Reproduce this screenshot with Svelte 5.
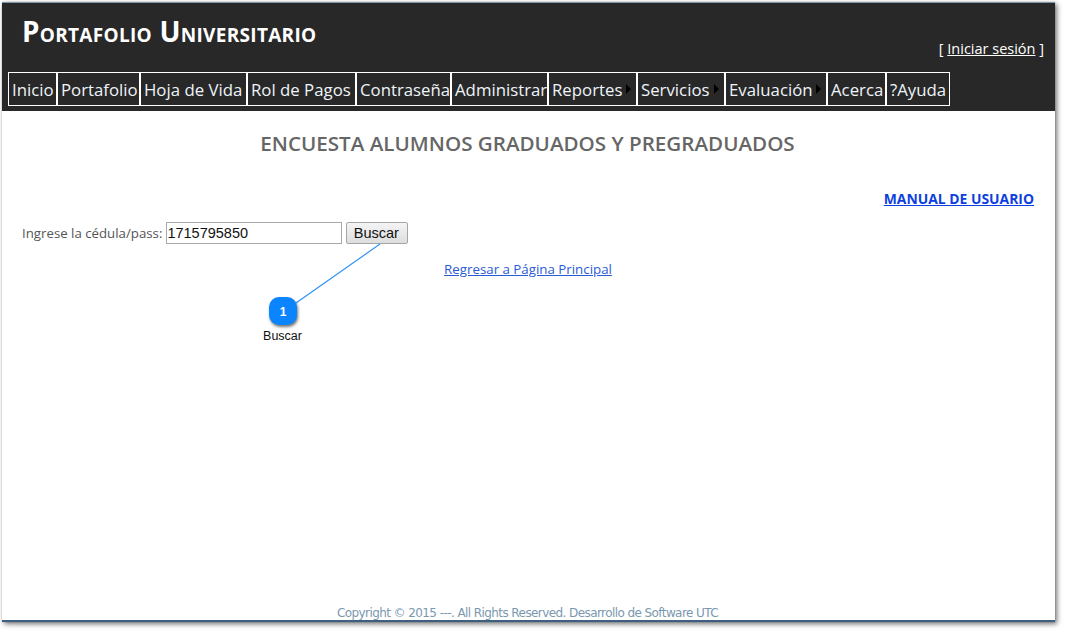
<script>
  const items = [
    { label: 'Inicio', w: 49 },
    { label: 'Portafolio', w: 83 },
    { label: 'Hoja de Vida', w: 107 },
    { label: 'Rol de Pagos', w: 109 },
    { label: 'Contraseña', w: 95 },
    { label: 'Administrar', w: 97 },
    { label: 'Reportes', w: 89, arrow: true },
    { label: 'Servicios', w: 88, arrow: true },
    { label: 'Evaluación', w: 102, arrow: true },
    { label: 'Acerca', w: 59 },
    { label: '?Ayuda', w: 64 }
  ];
</script>

<div class="stage">
  <div class="page">
    <header class="head">
      <div class="top">
        <h1 class="brand">Portafolio Universitario</h1>
        <div class="login">[ <a href="#a">Iniciar sesión</a> ]</div>
      </div>
      <nav class="menu">
        {#each items as it}
          <div class="item" style="width:{it.w}px">
            <span>{it.label}</span>
            {#if it.arrow}<i class="arrow"></i>{/if}
          </div>
        {/each}
      </nav>
    </header>

    <main class="body">
      <h2 class="title">ENCUESTA ALUMNOS GRADUADOS Y PREGRADUADOS</h2>
      <div class="manual"><a href="#m">MANUAL DE USUARIO</a></div>
      <div class="search">
        <label for="ced">Ingrese la cédula/pass:</label>
        <input id="ced" value="1715795850" />
        <button>Buscar</button>
      </div>
      <div class="back"><a href="#b">Regresar a Página Principal</a></div>
    </main>

    <footer class="foot">Copyright © 2015 ---. All Rights Reserved. Desarrollo de Software UTC</footer>
  </div>

  <svg class="line" width="1068" height="637" aria-hidden="true">
    <line x1="380" y1="244" x2="296" y2="303" stroke="#2f93f5" stroke-width="1.2" />
  </svg>
  <div class="pin">1</div>
  <div class="pin-label">Buscar</div>
</div>

<style>
  :global(body) { margin: 0; background: #fff; }
  .stage {
    position: relative;
    width: 1068px;
    height: 637px;
    padding: 2px 0 0 2px;
    box-sizing: border-box;
    overflow: hidden;
    font-family: "Open Sans", "Noto Sans", sans-serif;
  }
  .page {
    width: 1053px;
    height: 620px;
    background: #fff;
    border-bottom: 2px solid #3f5f80;
    box-sizing: border-box;
    box-shadow: 2px 2px 5px rgba(0, 0, 0, 0.55), 0 0 1px rgba(0, 0, 0, 0.3);
    display: flex;
    flex-direction: column;
  }
  .head {
    background: #282828;
    height: 109px;
    box-sizing: border-box;
    padding: 0 0 0 6px;
    border-top: 1px solid #7d97ad;
  }
  .top {
    height: 69px;
    display: flex;
    justify-content: space-between;
    box-sizing: border-box;
    padding: 0 11px 0 14px;
  }
  .brand {
    margin: 10px 0 0;
    font-size: 27.8px;
    line-height: 36px;
    font-weight: 700;
    font-variant: small-caps;
    color: #fff;
    letter-spacing: 0.3px;
    font-family: "Open Sans", sans-serif;
  }
  .login {
    margin-top: 36px;
    font-size: 14.5px;
    line-height: 20px;
    color: #fff;
  }
  .login a { color: #fff; }
  .menu { display: flex; }
  .item {
    height: 34px;
    box-sizing: border-box;
    border: 1px solid #fff;
    padding-left: 3px;
    display: flex;
    align-items: center;
    color: #eef4f9;
    font-size: 16.8px;
    white-space: nowrap;
    position: relative;
    background: #282828;
  }
  .arrow {
    position: absolute;
    right: 5px;
    top: 11px;
    width: 0;
    height: 0;
    border-left: 5px solid #000;
    border-top: 5px solid transparent;
    border-bottom: 5px solid transparent;
  }
  .body { flex: 1; padding: 0 0 0 20px; color: #444; }
  .title {
    margin: 18px 0 0;
    padding-right: 22px;
    text-align: center;
    font-size: 20.6px;
    line-height: 28px;
    font-weight: 600;
    color: #666;
  }
  .manual {
    margin-top: 32px;
    padding-right: 21px;
    text-align: right;
    font-size: 13.9px;
    line-height: 20px;
    font-weight: 700;
  }
  .manual a { color: #0d3fe0; }
  .search {
    display: flex;
    align-items: center;
    margin-top: 13px;
    height: 22px;
    font-size: 13.25px;
    color: #555;
  }
  .search label { margin-right: 4px; }
  .search input {
    width: 176px;
    height: 22px;
    box-sizing: border-box;
    border: 1px solid #a9a9a9;
    padding: 0;
    font: 14.5px "Liberation Sans", Arial, sans-serif;
    color: #111;
    outline: none;
  }
  .search button {
    margin-left: 4px;
    width: 62px;
    height: 22px;
    box-sizing: border-box;
    border: 1px solid #a6a6a6;
    border-radius: 2px;
    background: linear-gradient(#f4f4f4, #dedede);
    padding: 0 2px 0 0;
    font: 14.5px "Liberation Sans", Arial, sans-serif;
    color: #111;
  }
  .back {
    margin-top: 16px;
    padding-right: 21px;
    text-align: center;
    font-size: 13.3px;
    line-height: 18px;
  }
  .back a { color: #2a5bd7; }
  .foot {
    text-align: center;
    font: 12px "DejaVu Sans", sans-serif;
    letter-spacing: -0.58px;
    color: #7a98b0;
    height: 14px;
    line-height: 14px;
    padding-right: 2px;
  }
  .line { position: absolute; left: 0; top: 0; pointer-events: none; }
  .pin {
    position: absolute;
    left: 269px;
    top: 297px;
    width: 28px;
    height: 28px;
    border-radius: 10px;
    background: #0a84ff;
    box-shadow: 1px 2px 3px rgba(0, 0, 0, 0.55);
    color: #fff;
    font: 700 12px/30px "Liberation Sans", Arial, sans-serif;
    text-align: center;
  }
  .pin-label {
    position: absolute;
    left: 253px;
    top: 329px;
    width: 59px;
    text-align: center;
    font: 12.5px/14px "Liberation Sans", Arial, sans-serif;
    color: #111;
  }
</style>
